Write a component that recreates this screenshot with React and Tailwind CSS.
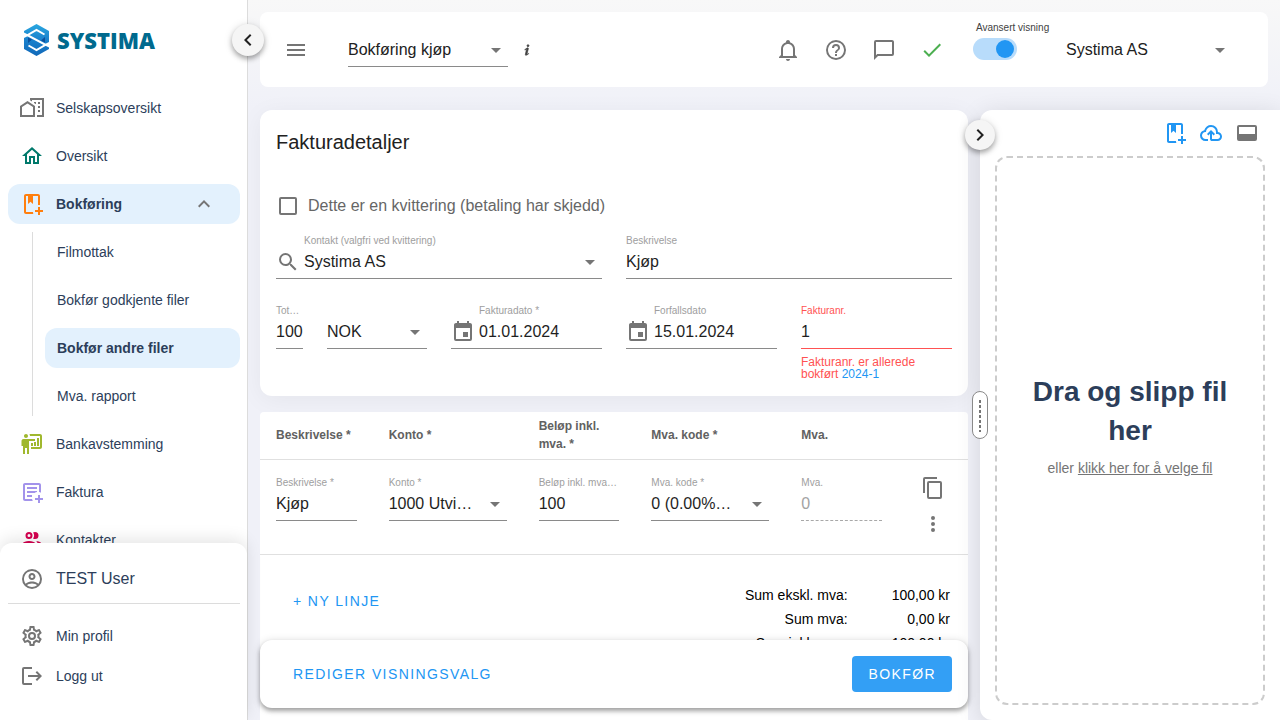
import React, { useId, useState } from "react";

const icons = {
  company:
    "M10,2V4.26L12,5.59V4H22V19H17V21H24V2H10M7.5,5L0,10V21H15V10L7.5,5M14,6V6.93L15.61,8H16V6H14M18,6V8H20V6H18M7.5,7.5L13,11V19H10V13H5V19H2V11L7.5,7.5M18,10V12H20V10H18M18,14V16H20V14H18M5,13H10V19H5Z",
  home: "M12 5.69L17 10.19V18H15V12H9V18H7V10.19L12 5.69M12 3L2 12H5V20H11V14H13V20H19V12H22L12 3",
  bookPlus:
    "M13 20C13 20.7 13.13 21.39 13.35 22H6C4.89 22 4 21.11 4 20V4C4 2.9 4.89 2 6 2H18C19.11 2 20 2.9 20 4V13.08C19.67 13.03 19.34 13 19 13S18.33 13.03 18 13.08V4H13V12L10.5 9.75L8 12V4H6V20H13M20 18V15H18V18H15V20H18V23H20V20H23V18H20Z",
  board:
    "M20 17C21.1 17 22 16.1 22 15V4C22 2.9 21.1 2 20 2H9.46C9.81 2.61 10 3.3 10 4H20V15H11V17H20M15 7V9H9V22H7V16H5V22H3V14H1.5V9C1.5 7.9 2.4 7 3.5 7H15M8 4C8 5.11 7.11 6 6 6S4 5.11 4 4 4.9 2 6 2 8 2.9 8 4M17 6H19V14H17V6M14 10H16V14H14V10M11 11H13V14H11V11Z",
  invoice:
    "M12.8 21H5C3.9 21 3 20.1 3 19V5C3 3.9 3.9 3 5 3H19C20.1 3 21 3.9 21 5V12.8C20.39 12.45 19.72 12.2 19 12.08V5H5V19H12.08C12.2 19.72 12.45 20.39 12.8 21M12 17H7V15H12M14.68 13H7V11H17V12.08C16.15 12.22 15.37 12.54 14.68 13M17 9H7V7H17M20 18V15H18V18H15V20H18V23H20V20H23V18H20Z",
  people:
    "M13.07 10.41A5 5 0 0 0 13.07 4.59A3.39 3.39 0 0 1 15 4A3.5 3.5 0 0 1 15 11A3.39 3.39 0 0 1 13.07 10.41M5.5 7.5A3.5 3.5 0 1 1 9 11A3.5 3.5 0 0 1 5.5 7.5M7.5 7.5A1.5 1.5 0 1 0 9 6A1.5 1.5 0 0 0 7.5 7.5M16 17V19H2V17S2 13 9 13 16 17 16 17M14 17C13.86 16.22 12.67 15 9 15S4.07 16.31 4 17M15.95 13A5.32 5.32 0 0 1 18 17V19H22V17S22 13.37 15.94 13Z",
  account:
    "M12,2A10,10 0 0,0 2,12A10,10 0 0,0 12,22A10,10 0 0,0 22,12A10,10 0 0,0 12,2M7.07,18.28C7.5,17.38 10.12,16.5 12,16.5C13.88,16.5 16.5,17.38 16.93,18.28C15.57,19.36 13.86,20 12,20C10.14,20 8.43,19.36 7.07,18.28M18.36,16.83C16.93,15.09 13.46,14.5 12,14.5C10.54,14.5 7.07,15.09 5.64,16.83C4.62,15.5 4,13.82 4,12C4,7.59 7.59,4 12,4C16.41,4 20,7.59 20,12C20,13.82 19.38,15.5 18.36,16.83M12,6C10.06,6 8.5,7.56 8.5,9.5C8.5,11.44 10.06,13 12,13C13.94,13 15.5,11.44 15.5,9.5C15.5,7.56 13.94,6 12,6M12,11A1.5,1.5 0 0,1 10.5,9.5A1.5,1.5 0 0,1 12,8A1.5,1.5 0 0,1 13.5,9.5A1.5,1.5 0 0,1 12,11Z",
  cog: "M12,8A4,4 0 0,1 16,12A4,4 0 0,1 12,16A4,4 0 0,1 8,12A4,4 0 0,1 12,8M12,10A2,2 0 0,0 10,12A2,2 0 0,0 12,14A2,2 0 0,0 14,12A2,2 0 0,0 12,10M10,22C9.75,22 9.54,21.82 9.5,21.58L9.13,18.93C8.5,18.68 7.96,18.34 7.44,17.94L4.95,18.95C4.73,19.03 4.46,18.95 4.34,18.73L2.34,15.27C2.21,15.05 2.27,14.78 2.46,14.63L4.57,12.97L4.5,12L4.57,11L2.46,9.37C2.27,9.22 2.21,8.95 2.34,8.73L4.34,5.27C4.46,5.05 4.73,4.96 4.95,5.05L7.44,6.05C7.96,5.66 8.5,5.32 9.13,5.07L9.5,2.42C9.54,2.18 9.75,2 10,2H14C14.25,2 14.46,2.18 14.5,2.42L14.87,5.07C15.5,5.32 16.04,5.66 16.56,6.05L19.05,5.05C19.27,4.96 19.54,5.05 19.66,5.27L21.66,8.73C21.79,8.95 21.73,9.22 21.54,9.37L19.43,11L19.5,12L19.43,13L21.54,14.63C21.73,14.78 21.79,15.05 21.66,15.27L19.66,18.73C19.54,18.95 19.27,19.04 19.05,18.95L16.56,17.95C16.04,18.34 15.5,18.68 14.87,18.93L14.5,21.58C14.46,21.82 14.25,22 14,22H10M11.25,4L10.88,6.61C9.68,6.86 8.62,7.5 7.85,8.39L5.44,7.35L4.69,8.65L6.8,10.2C6.4,11.37 6.4,12.64 6.8,13.8L4.68,15.36L5.43,16.66L7.86,15.62C8.63,16.5 9.68,17.14 10.87,17.38L11.24,20H12.76L13.13,17.39C14.32,17.14 15.37,16.5 16.14,15.62L18.57,16.66L19.32,15.36L17.2,13.81C17.6,12.64 17.6,11.37 17.2,10.2L19.31,8.65L18.56,7.35L16.15,8.39C15.38,7.5 14.32,6.86 13.12,6.62L12.75,4H11.25Z",
  logout:
    "M12 3V5H4V19H12V21H4A2 2 0 0 1 2 19V5A2 2 0 0 1 4 3ZM17 7L22 12L17 17L15.6 15.6L18.2 13H8V11H18.2L15.6 8.4Z",
  menu: "M3,6H21V8H3V6M3,11H21V13H3V11M3,16H21V18H3V16Z",
  info: "M13.5,4A1.5,1.5 0 0,0 12,5.5A1.5,1.5 0 0,0 13.5,7A1.5,1.5 0 0,0 15,5.5A1.5,1.5 0 0,0 13.5,4M13.14,8.77C11.95,8.87 8.7,11.46 8.7,11.46C8.5,11.61 8.56,11.6 8.72,11.88C8.88,12.15 8.86,12.17 9.05,12.04C9.25,11.91 9.58,11.7 10.13,11.36C12.25,10 10.47,13.14 9.56,18.43C9.2,21.05 11.56,19.7 12.17,19.3C12.77,18.91 14.38,17.8 14.54,17.69C14.76,17.54 14.6,17.42 14.43,17.17C14.31,17 14.19,17.12 14.19,17.12C13.54,17.55 12.35,18.45 12.19,17.88C12,17.31 13.22,13.4 13.89,10.71C14,10.07 14.3,8.67 13.14,8.77Z",
  bell: "M10 21H14C14 22.1 13.1 23 12 23S10 22.1 10 21M21 19V20H3V19L5 17V11C5 7.9 7.03 5.17 10 4.29V4C10 2.9 10.9 2 12 2S14 2.9 14 4V4.29C16.97 5.17 19 7.9 19 11V17L21 19M17 11C17 8.24 14.76 6 12 6S7 8.24 7 11V18H17V11Z",
  help: "M11,18H13V16H11V18M12,2A10,10 0 0,0 2,12A10,10 0 0,0 12,22A10,10 0 0,0 22,12A10,10 0 0,0 12,2M12,20C7.59,20 4,16.41 4,12C4,7.59 7.59,4 12,4C16.41,4 20,7.59 20,12C20,16.41 16.41,20 12,20M12,6A4,4 0 0,0 8,10H10A2,2 0 0,1 12,8A2,2 0 0,1 14,10C14,12 11,11.75 11,15H13C13,12.75 16,12.5 16,10A4,4 0 0,0 12,6Z",
  message:
    "M20,2H4A2,2 0 0,0 2,4V22L6,18H20A2,2 0 0,0 22,16V4C22,2.89 21.1,2 20,2M20,16H5.17L4,17.17V4H20V16Z",
  check: "M21,7L9,19L3.5,13.5L4.91,12.09L9,16.17L19.59,5.59L21,7Z",
  cloud:
    "M6.5 20Q4.22 20 2.61 18.43 1 16.85 1 14.58 1 12.63 2.17 11.1 3.35 9.57 5.25 9.15 5.88 6.85 7.75 5.43 9.63 4 12 4 14.93 4 16.96 6.04 19 8.07 19 11 20.73 11.2 21.86 12.5 23 13.78 23 15.5 23 17.38 21.69 18.69 20.38 20 18.5 20H13Q12.18 20 11.59 19.41 11 18.83 11 18V12.85L9.4 14.4 8 13 12 9 16 13 14.6 14.4 13 12.85V18H18.5Q19.55 18 20.27 17.27 21 16.55 21 15.5 21 14.45 20.27 13.73 19.55 13 18.5 13H17V11Q17 8.93 15.54 7.46 14.08 6 12 6 9.93 6 8.46 7.46 7 8.93 7 11H6.5Q5.05 11 4.03 12.03 3 13.05 3 14.5 3 15.95 4.03 17 5.05 18 6.5 18H9V20Z",
  dock: "M20 4H4A2 2 0 0 0 2 6V18A2 2 0 0 0 4 20H20A2 2 0 0 0 22 18V6A2 2 0 0 0 20 4M20 13H4V6H20Z",
  search:
    "M9.5,3A6.5,6.5 0 0,1 16,9.5C16,11.11 15.41,12.59 14.44,13.73L14.71,14H15.5L20.5,19L19,20.5L14,15.5V14.71L13.73,14.44C12.59,15.41 11.11,16 9.5,16A6.5,6.5 0 0,1 3,9.5A6.5,6.5 0 0,1 9.5,3M9.5,5C7,5 5,7 5,9.5C5,12 7,14 9.5,14C12,14 14,12 14,9.5C14,7 12,5 9.5,5Z",
  calendar:
    "M19,19H5V8H19M16,1V3H8V1H6V3H5C3.89,3 3,3.89 3,5V19A2,2 0 0,0 5,21H19A2,2 0 0,0 21,19V5C21,3.89 20.1,3 19,3H18V1M17,12H12V17H17V12Z",
  copy: "M19,21H8V7H19M19,5H8A2,2 0 0,0 6,7V21A2,2 0 0,0 8,23H19A2,2 0 0,0 21,21V7A2,2 0 0,0 19,5M16,1H4A2,2 0 0,0 2,3V17H4V3H16V1Z",
  dots: "M12,16A2,2 0 0,1 14,18A2,2 0 0,1 12,20A2,2 0 0,1 10,18A2,2 0 0,1 12,16M12,10A2,2 0 0,1 14,12A2,2 0 0,1 12,14A2,2 0 0,1 10,12A2,2 0 0,1 12,10M12,4A2,2 0 0,1 14,6A2,2 0 0,1 12,8A2,2 0 0,1 10,6A2,2 0 0,1 12,4Z",
  down: "M7,10L12,15L17,10H7Z",
  chevronUp: "M7.41,15.41L12,10.83L16.59,15.41L18,14L12,8L6,14L7.41,15.41Z",
  chevronLeft: "M15.41,16.58L10.83,12L15.41,7.41L14,6L8,12L14,18L15.41,16.58Z",
  chevronRight: "M8.59,16.58L13.17,12L8.59,7.41L10,6L16,12L10,18L8.59,16.58Z",
};

function Icon({ name, className = "size-6 text-[#757575]" }) {
  return (
    <svg viewBox="0 0 24 24" fill="currentColor" fillRule="evenodd" aria-hidden="true" className={`shrink-0 ${className}`}>
      <path d={icons[name]} />
    </svg>
  );
}

function IconButton({ name, label, className }) {
  return (
    <button type="button" aria-label={label} className="flex shrink-0 cursor-pointer">
      <Icon name={name} className={className} />
    </button>
  );
}

function Logo() {
  return (
    <a href="#hjem" className="flex h-8 items-center gap-2 px-6" aria-label="Systima">
      <svg viewBox="0 0 25 32" className="h-8 w-[25px] shrink-0" aria-hidden="true">
        <defs>
          <linearGradient id="logoFill" x1="0" y1="0" x2="0" y2="1">
            <stop offset="0" stopColor="#2aa8e0" />
            <stop offset="0.5" stopColor="#1a80cc" />
            <stop offset="1" stopColor="#1168b8" />
          </linearGradient>
        </defs>
        <path d="M12.500 0 25 7V25L12.500 32 0 25V7Z" fill="url(#logoFill)" />
        <path d="M4 13.500 8 15.500 4 19ZM21 18.500 17 16.500 21 13Z" fill="#0c4f9c" />
        <path d="M20.500 10.500 12.500 6 3.500 11.200 21.500 20.800 12.500 26 4.500 21.500" fill="none" stroke="#fff" strokeWidth="2" />
        <path d="M0 8.500 4 10.500V12L0 14ZM25 23.500 21 21.500V20L25 18Z" fill="#fff" />
      </svg>
      <span className="font-['Open_Sans',sans-serif] text-[22px] leading-[30px] font-extrabold text-[#006a8e]">SYSTIMA</span>
    </a>
  );
}

const navBefore = [
  { icon: "company", label: "Selskapsoversikt", color: "size-6 text-[#757575]" },
  { icon: "home", label: "Oversikt", color: "size-6 text-[#00796b]" },
];
const navAfter = [
  { icon: "board", label: "Bankavstemming", color: "size-6 text-[#a0b82e]" },
  { icon: "invoice", label: "Faktura", color: "size-6 text-[#a393eb]" },
  { icon: "people", label: "Kontakter", color: "size-6 text-[#d5004f]" },
];
const subNav = ["Filmottak", "Bokfør godkjente filer", "Bokfør andre filer", "Mva. rapport"];

function NavLink({ icon, label, color }) {
  return (
    <a href="#side" className="flex h-10 shrink-0 items-center gap-3 rounded-xl px-3 pb-px">
      <Icon name={icon} className={color} />
      {label}
    </a>
  );
}

function Sidebar() {
  return (
    <aside className="relative z-20 flex w-62 shrink-0 flex-col border-r border-[#dcdcdc] bg-white pt-6 text-sm text-[#2c3e5a]">
      <Logo />
      <button
        type="button"
        aria-label="Skjul meny"
        className="absolute top-6 -right-[17px] flex size-8 items-center justify-center rounded-full bg-[#f5f5f5] text-[#212121] shadow-[0_3px_5px_rgba(0,0,0,0.3),0_1px_10px_rgba(0,0,0,0.12)]"
      >
        <Icon name="chevronLeft" className="size-6" />
      </button>
      <nav className="mt-8 flex min-h-0 flex-1 flex-col gap-2 overflow-hidden pr-[7px] pl-2">
        {navBefore.map((item) => (
          <NavLink key={item.label} {...item} />
        ))}
        <button
          type="button"
          aria-expanded="true"
          className="flex h-10 shrink-0 items-center gap-3 rounded-xl bg-[#e3f1fd] px-3 pb-px font-bold"
        >
          <Icon name="bookPlus" className="size-6 text-[#ff7f0e]" />
          <span className="flex-1 text-left">Bokføring</span>
          <Icon name="chevronUp" className="mr-3 size-6 text-[#757575]" />
        </button>
        <div className="ml-6 flex shrink-0 flex-col gap-2 border-l border-[#dcdcdc] pl-3">
          {subNav.map((label) => (
            <a
              key={label}
              href="#side"
              className={`flex h-10 items-center rounded-xl px-3 pb-px ${label === "Bokfør andre filer" ? "bg-[#e3f1fd] font-bold" : ""}`}
            >
              {label}
            </a>
          ))}
        </div>
        {navAfter.map((item) => (
          <NavLink key={item.label} {...item} />
        ))}
      </nav>
      <div className="relative shrink-0 rounded-t-xl bg-white pr-[7px] pb-6 pl-2 shadow-[0_-4px_16px_rgba(0,0,0,0.1)]">
        <div className="flex h-[61px] items-center gap-3 border-b border-[#dcdcdc] px-3 pt-3 text-base">
          <Icon name="account" />
          TEST User
        </div>
        <div className="flex flex-col pt-3">
          <a href="#profil" className="flex h-10 items-center gap-3 px-3 pb-px">
            <Icon name="cog" />
            Min profil
          </a>
          <a href="#logg-ut" className="flex h-10 items-center gap-3 px-3 pb-px">
            <Icon name="logout" />
            Logg ut
          </a>
        </div>
      </div>
    </aside>
  );
}

function Header() {
  const [advanced, setAdvanced] = useState(true);
  return (
    <header className="mr-3 flex h-[75px] shrink-0 items-center rounded-lg bg-white pr-9 pl-6">
      <IconButton name="menu" label="Meny" />
      <div className="ml-10 flex h-[35px] w-40 items-center border-b border-[#8a8a8a] pt-px">
        <select aria-label="Visning" className="min-w-0 flex-1 appearance-none bg-transparent text-base text-[#212121] outline-none">
          <option>Bokføring kjøp</option>
        </select>
        <Icon name="down" />
      </div>
      <div className="ml-[11px]">
        <IconButton name="info" label="Informasjon" className="size-4 stroke-current text-[#424242]" />
      </div>
      <div className="ml-auto flex items-center gap-6">
        <IconButton name="bell" label="Varsler" />
        <IconButton name="help" label="Hjelp" />
        <IconButton name="message" label="Meldinger" />
        <Icon name="check" className="size-6 text-[#4caf50]" />
      </div>
      <div className="mr-3 ml-[29px] flex w-[81px] flex-col gap-1 self-start pt-[10px]">
        <label htmlFor="advanced" className="pl-[3px] text-[10px] leading-3 text-[#424242]">
          Avansert visning
        </label>
        <input
          id="advanced"
          type="checkbox"
          role="switch"
          checked={advanced}
          onChange={(e) => setAdvanced(e.target.checked)}
          className="flex h-[22px] w-11 appearance-none items-center justify-start rounded-full bg-[#cfd8dc] px-[3px] before:size-[18px] before:rounded-full before:bg-[#90a4ae] checked:justify-end checked:bg-[#b8dcfb] checked:before:bg-[#2196f3]"
        />
      </div>
      <div className="flex w-[166px] items-center">
        <select aria-label="Selskap" className="min-w-0 flex-1 appearance-none bg-transparent text-base text-[#212121] outline-none">
          <option>Systima AS</option>
        </select>
        <Icon name="down" />
      </div>
    </header>
  );
}

function Field({ label, value, icon, select, error, disabled, hint, hideLabel }) {
  const id = useId();
  const line = error ? "border-[#ff5252]" : disabled ? "border-dashed border-[#a8a8a8]" : "border-[#8a8a8a]";
  const control = `min-w-0 flex-1 appearance-none bg-transparent text-base outline-none ${disabled ? "text-[#a3a3a3]" : "text-[#1f1f1f]"}`;
  return (
    <div className="min-w-0">
      <label
        htmlFor={id}
        className={`block h-3.5 text-[10px] leading-3.5 font-normal whitespace-nowrap ${icon ? "pl-7" : ""} ${error ? "text-[#ff5252]" : "text-[#9e9e9e]"}`}
      >
        {hideLabel ? <span className="sr-only">{label}</span> : label}
      </label>
      <div className={`flex h-[31px] items-center border-b pb-0.5 ${line}`}>
        {icon && <Icon name={icon} className="mr-1 size-6 text-[#757575]" />}
        {select ? (
          <select id={id} className={control}>
            <option>{value}</option>
          </select>
        ) : (
          <input id={id} type="text" defaultValue={value} disabled={disabled} className={control} />
        )}
        {select && <Icon name="down" />}
      </div>
      {hint}
    </div>
  );
}

function InvoiceDetails() {
  return (
    <section className="shrink-0 rounded-xl bg-white p-4 shadow-[0_4px_25px_rgba(0,0,0,0.05)]">
      <h1 className="text-xl leading-8 font-normal text-[#212121]">Fakturadetaljer</h1>
      <label className="mt-9 flex h-6 w-fit items-center gap-[11px] pl-[3px] text-base text-[#666666]">
        <input type="checkbox" className="size-[18px] appearance-none rounded-xs border-2 border-[#757575] checked:bg-[#2196f3]" />
        Dette er en kvittering (betaling har skjedd)
      </label>
      <div className="mt-4 grid grid-cols-2 gap-6">
        <Field label="Kontakt (valgfri ved kvittering)" value="Systima AS" icon="search" select />
        <Field label="Beskrivelse" value="Kjøp" />
      </div>
      <div className="mt-[25px] grid grid-cols-[27px_100px_1fr_1fr_1fr] gap-6">
        <Field label="Tot…" value="100" />
        <Field label="Valuta" hideLabel value="NOK" select />
        <Field label="Fakturadato *" value="01.01.2024" icon="calendar" />
        <Field label="Forfallsdato" value="15.01.2024" icon="calendar" />
        <Field
          label="Fakturanr."
          value="1"
          error
          hint={
            <p className="mt-[7px] text-xs leading-3 text-[#ff5252]">
              Fakturanr. er allerede bokført{" "}
              <a href="#2024-1" className="text-[#2196f3]">
                2024-1
              </a>
            </p>
          }
        />
      </div>
    </section>
  );
}

function Lines() {
  return (
    <section className="mt-4 flex-1 rounded-t bg-white">
      <table className="w-full table-fixed border-collapse text-left">
        <thead>
          <tr className="h-[47px] border-b border-[#e0e0e0] text-xs leading-[18px] text-[#616161]">
            <th scope="col" className="px-4">Beskrivelse *</th>
            <th scope="col" className="w-[150px] px-4">Konto *</th>
            <th scope="col" className="px-4">Beløp inkl. mva. *</th>
            <th scope="col" className="w-[150px] px-4">Mva. kode *</th>
            <th scope="col" className="px-4">Mva.</th>
            <td className="w-[70px]" />
          </tr>
        </thead>
        <tbody>
          <tr className="h-[95px] border-b border-[#e0e0e0] align-top">
            <td className="px-4 pt-4">
              <Field label="Beskrivelse *" value="Kjøp" />
            </td>
            <td className="px-4 pt-4">
              <Field label="Konto *" value="1000 Utvi…" select />
            </td>
            <td className="px-4 pt-4">
              <Field label="Beløp inkl. mva…" value="100" />
            </td>
            <td className="px-4 pt-4">
              <Field label="Mva. kode *" value="0 (0.00%…" select />
            </td>
            <td className="px-4 pt-4">
              <Field label="Mva." value="0" disabled />
            </td>
            <td className="pt-4">
              <div className="flex flex-col items-center gap-3">
                <IconButton name="copy" label="Kopier linje" />
                <IconButton name="dots" label="Flere valg" />
              </div>
            </td>
          </tr>
        </tbody>
      </table>
      <div className="flex items-start justify-between pt-7 pr-[18px] pl-[33px]">
        <button type="button" className="h-9 cursor-pointer text-sm tracking-widest text-[#2196f3]">
          + NY LINJE
        </button>
        <dl className="grid grid-cols-[auto_auto] gap-x-11 text-right text-sm leading-6 text-black">
          <dt>Sum ekskl. mva:</dt>
          <dd>100,00 kr</dd>
          <dt>Sum mva:</dt>
          <dd>0,00 kr</dd>
          <dt>Sum inkl. mva:</dt>
          <dd>100,00 kr</dd>
        </dl>
      </div>
    </section>
  );
}

function UploadPanel() {
  return (
    <aside className="relative flex w-75 shrink-0 flex-col rounded-l-xl bg-white px-[15px] pb-[15px] shadow-[0_4px_25px_rgba(0,0,0,0.12)]">
      <button
        type="button"
        aria-label="Skjul panel"
        className="absolute top-[10px] -left-[15px] flex size-[30px] items-center justify-center rounded-full bg-[#f5f5f5] text-[#212121] shadow-[0_3px_5px_rgba(0,0,0,0.3),0_1px_10px_rgba(0,0,0,0.12)]"
      >
        <Icon name="chevronRight" className="size-6" />
      </button>
      <div
        role="separator"
        aria-orientation="vertical"
        className="absolute top-[281px] -left-2 flex h-12 w-4 justify-center rounded-full border border-[#8a8a8a] bg-white py-2"
      >
        <svg viewBox="0 0 2 32" className="h-8 w-0.5 text-[#757575]" aria-hidden="true">
          <path d="M1 0V32" stroke="currentColor" strokeWidth="2" strokeDasharray="3 2" />
        </svg>
      </div>
      <div className="flex h-[46px] shrink-0 items-center justify-end gap-3 pr-[6px]">
        <IconButton name="bookPlus" label="Ny bokføring" className="size-6 text-[#2196f3]" />
        <IconButton name="cloud" label="Last opp" className="size-6 text-[#2196f3]" />
        <IconButton name="dock" label="Vis nederst" />
      </div>
      <div className="flex flex-1 flex-col items-center justify-center rounded-xl border-2 border-dashed border-[#cccccc] px-6 pb-3 text-center">
        <h2 className="text-[28px] leading-[39px] font-bold text-[#2c3e5a]">Dra og slipp fil her</h2>
        <p className="mt-2 text-sm text-[#757575]">
          eller{" "}
          <button type="button" className="cursor-pointer underline">
            klikk her for å velge fil
          </button>
        </p>
      </div>
    </aside>
  );
}

export default function App() {
  return (
    <div className="flex h-screen overflow-hidden bg-linear-to-b from-[#f8f8f8] to-[#f0f1f8] to-15% font-['Liberation_Sans',Arial,sans-serif]">
      <Sidebar />
      <div className="flex min-w-0 flex-1 flex-col gap-[23px] pt-3 pl-3">
        <Header />
        <div className="flex min-h-0 flex-1 gap-3">
          <main className="relative flex min-w-0 flex-1 flex-col">
            <InvoiceDetails />
            <Lines />
            <div className="absolute inset-x-0 bottom-3 flex h-17 items-center justify-between rounded-xl bg-white pr-4 pl-[33px] shadow-[0_3px_4px_rgba(0,0,0,0.3),0_1px_8px_rgba(0,0,0,0.15)]">
              <button type="button" className="cursor-pointer text-sm tracking-widest text-[#2196f3]">
                REDIGER VISNINGSVALG
              </button>
              <button type="button" className="h-9 cursor-pointer rounded bg-[#339ff5] px-4 text-sm tracking-widest text-white">
                BOKFØR
              </button>
            </div>
          </main>
          <UploadPanel />
        </div>
      </div>
    </div>
  );
}
